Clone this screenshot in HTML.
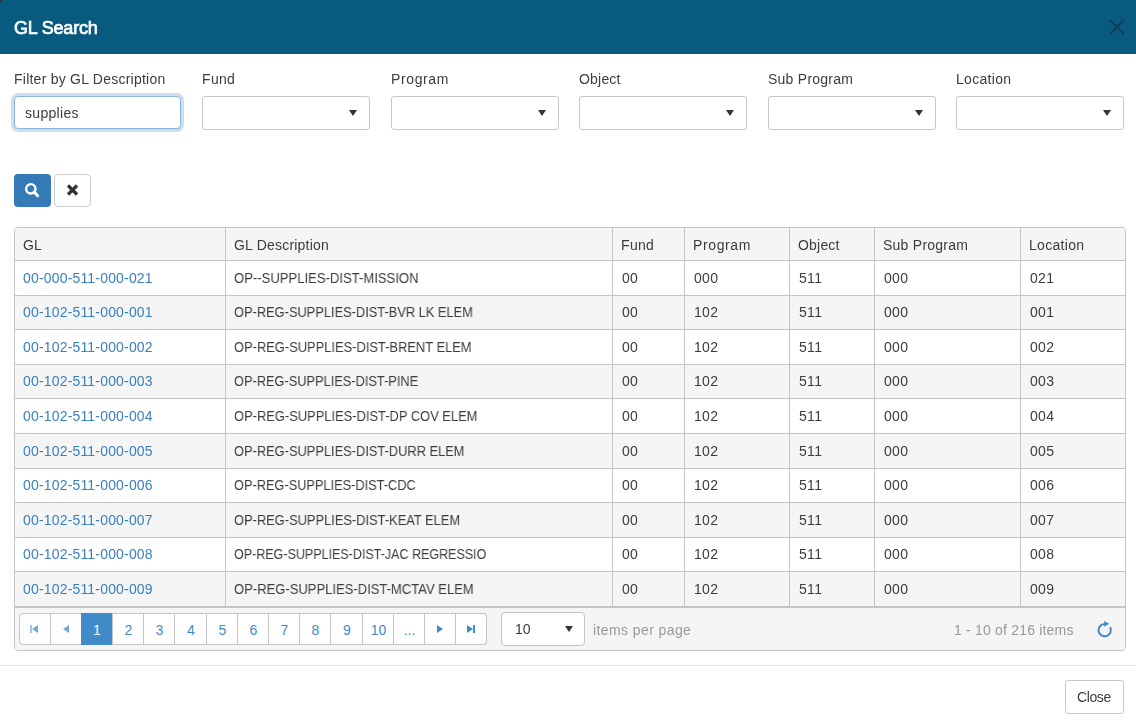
<!DOCTYPE html>
<html><head><meta charset="utf-8"><title>GL Search</title>
<style>
*{box-sizing:border-box}
html,body{margin:0;padding:0}
body{width:1136px;height:726px;overflow:hidden;background:#fff;position:relative;font-family:"Liberation Sans",sans-serif;font-size:14px;color:#3c3c3c}
.abs{position:absolute}
.tx{white-space:nowrap;display:inline-block;will-change:transform}
.hdr{left:0;top:0;width:1136px;height:54px;background:#085a7e}
.title{left:14px;top:17px;font-size:18px;font-weight:normal;-webkit-text-stroke:0.7px #fff;color:#fff;line-height:22px}
.lbl{top:70px;line-height:18px;color:#3c3c3c}
.inp{top:96px;height:34px;width:168px;border:1px solid #c8c8c8;border-radius:3px;background:#fff}
.inp.focus{border-color:#8ab4d9;box-shadow:0 0 0 3px #cddfee}
.caret{position:absolute;width:0;height:0;border-left:4px solid transparent;border-right:4px solid transparent;border-top:6px solid #333}
.btn{top:174px;height:33px;width:37px;border-radius:4px}
.grid{left:14px;top:227px;width:1112px;height:424px;border:1px solid #c5c5c5;border-radius:4px;background:#fff;overflow:hidden}
.cell{position:absolute;line-height:20px}
.vl{position:absolute;width:1px;background:#c5c5c5}
.hl{position:absolute;height:1px;background:#c5c5c5;left:0;width:1110px}
.lnk{color:#3a80c0}
.pbtn{position:absolute;top:613px;height:32px;border:1px solid #c5c5c5;border-left:none;background:#fff;text-align:center;line-height:30px;color:#337ab7}
</style></head><body>

<div class="abs hdr"></div><div class="abs" style="left:0;top:0;width:1px;height:1px;background:#3a0a0a"></div>
<div class="abs title"><span class="tx " style="letter-spacing:-0.2px">GL Search</span></div>
<svg class="abs" style="left:1109px;top:19px" width="16" height="16" viewBox="0 0 16 16"><path d="M1.5 1.5L14.5 14.5M14.5 1.5L1.5 14.5" stroke="#14384a" stroke-width="1.6" stroke-linecap="round"/></svg>
<div class="abs lbl" style="left:14px"><span class="tx " style="letter-spacing:0.239px">Filter by GL Description</span></div>
<div class="abs lbl" style="left:202px"><span class="tx " style="letter-spacing:0.333px">Fund</span></div>
<div class="abs lbl" style="left:391px"><span class="tx " style="letter-spacing:0.617px">Program</span></div>
<div class="abs lbl" style="left:579px"><span class="tx " style="letter-spacing:0.2px">Object</span></div>
<div class="abs lbl" style="left:768px"><span class="tx " style="letter-spacing:0.25px">Sub Program</span></div>
<div class="abs lbl" style="left:956px"><span class="tx " style="letter-spacing:0.314px">Location</span></div>
<div class="abs inp focus" style="left:14px;width:167px;height:33px;border-radius:4px"></div>
<div class="abs" style="left:25px;top:103px;line-height:20px"><span class="tx " style="letter-spacing:0.314px">supplies</span></div>
<div class="abs inp" style="left:202px"></div>
<div class="caret" style="left:349px;top:110px"></div>
<div class="abs inp" style="left:391px"></div>
<div class="caret" style="left:538px;top:110px"></div>
<div class="abs inp" style="left:579px"></div>
<div class="caret" style="left:726px;top:110px"></div>
<div class="abs inp" style="left:768px"></div>
<div class="caret" style="left:915px;top:110px"></div>
<div class="abs inp" style="left:956px"></div>
<div class="caret" style="left:1103px;top:110px"></div>
<div class="abs btn" style="left:14px;background:#337ab7"></div>
<svg class="abs" style="left:23px;top:182px" width="18" height="18" viewBox="0 0 18 18"><circle cx="7.8" cy="6.8" r="4.7" fill="none" stroke="#fff" stroke-width="2.4"/><path d="M11 10L14.6 13.6" stroke="#fff" stroke-width="3" stroke-linecap="round"/></svg>
<div class="abs btn" style="left:54px;border:1px solid #ccc;background:#fff"></div>
<svg class="abs" style="left:64px;top:182px" width="16" height="16" viewBox="0 0 16 16"><path d="M4 3.5L13 12.5M13 3.5L4 12.5" stroke="#333" stroke-width="3.2"/></svg>
<div class="abs grid">
<div class="abs" style="left:0;top:0;width:1110px;height:33px;background:#f5f5f5"></div>
<div class="abs" style="left:0;top:67.6px;width:1110px;height:34.6px;background:#f5f5f5"></div>
<div class="abs" style="left:0;top:136.8px;width:1110px;height:34.6px;background:#f5f5f5"></div>
<div class="abs" style="left:0;top:206.0px;width:1110px;height:34.6px;background:#f5f5f5"></div>
<div class="abs" style="left:0;top:275.20000000000005px;width:1110px;height:34.6px;background:#f5f5f5"></div>
<div class="abs" style="left:0;top:344.40000000000003px;width:1110px;height:34.6px;background:#f5f5f5"></div>
<div class="abs" style="left:0;top:379px;width:1110px;height:44px;background:#f5f5f5"></div>
<div class="hl" style="top:32px"></div>
<div class="hl" style="top:66.6px"></div>
<div class="hl" style="top:101.2px"></div>
<div class="hl" style="top:135.8px"></div>
<div class="hl" style="top:170.4px"></div>
<div class="hl" style="top:205.0px"></div>
<div class="hl" style="top:239.60000000000002px"></div>
<div class="hl" style="top:274.20000000000005px"></div>
<div class="hl" style="top:308.8px"></div>
<div class="hl" style="top:343.40000000000003px"></div>
<div class="hl" style="top:378px;height:2px"></div>
<div class="vl" style="left:210px;top:0;height:379px"></div>
<div class="vl" style="left:597px;top:0;height:379px"></div>
<div class="vl" style="left:669px;top:0;height:379px"></div>
<div class="vl" style="left:774px;top:0;height:379px"></div>
<div class="vl" style="left:859px;top:0;height:379px"></div>
<div class="vl" style="left:1005px;top:0;height:379px"></div>
<div class="cell" style="left:8px;top:7px"><span class="tx ">GL</span></div>
<div class="cell" style="left:219px;top:7px"><span class="tx " style="letter-spacing:0.208px">GL Description</span></div>
<div class="cell" style="left:606px;top:7px"><span class="tx " style="letter-spacing:0.333px">Fund</span></div>
<div class="cell" style="left:678px;top:7px"><span class="tx " style="letter-spacing:0.617px">Program</span></div>
<div class="cell" style="left:783px;top:7px"><span class="tx " style="letter-spacing:0.2px">Object</span></div>
<div class="cell" style="left:868px;top:7px"><span class="tx " style="letter-spacing:0.25px">Sub Program</span></div>
<div class="cell" style="left:1014px;top:7px"><span class="tx " style="letter-spacing:0.314px">Location</span></div>
<div class="cell lnk" style="left:8px;top:39.6px"><span class="tx " style="letter-spacing:0.176px">00-000-511-000-021</span></div>
<div class="cell " style="left:219px;top:39.6px"><span class="tx " style="transform:scaleX(0.934);transform-origin:0 0">OP--SUPPLIES-DIST-MISSION</span></div>
<div class="cell " style="left:606.6px;top:39.6px"><span class="tx" style="letter-spacing:0.3px">00</span></div>
<div class="cell " style="left:678.6px;top:39.6px"><span class="tx" style="letter-spacing:0.3px">000</span></div>
<div class="cell " style="left:783.6px;top:39.6px"><span class="tx" style="letter-spacing:0.3px">511</span></div>
<div class="cell " style="left:868.6px;top:39.6px"><span class="tx" style="letter-spacing:0.3px">000</span></div>
<div class="cell " style="left:1014.6px;top:39.6px"><span class="tx" style="letter-spacing:0.3px">021</span></div>
<div class="cell lnk" style="left:8px;top:74.19999999999999px"><span class="tx " style="letter-spacing:0.176px">00-102-511-000-001</span></div>
<div class="cell " style="left:219px;top:74.19999999999999px"><span class="tx " style="transform:scaleX(0.9165);transform-origin:0 0">OP-REG-SUPPLIES-DIST-BVR LK ELEM</span></div>
<div class="cell " style="left:606.6px;top:74.19999999999999px"><span class="tx" style="letter-spacing:0.3px">00</span></div>
<div class="cell " style="left:678.6px;top:74.19999999999999px"><span class="tx" style="letter-spacing:0.3px">102</span></div>
<div class="cell " style="left:783.6px;top:74.19999999999999px"><span class="tx" style="letter-spacing:0.3px">511</span></div>
<div class="cell " style="left:868.6px;top:74.19999999999999px"><span class="tx" style="letter-spacing:0.3px">000</span></div>
<div class="cell " style="left:1014.6px;top:74.19999999999999px"><span class="tx" style="letter-spacing:0.3px">001</span></div>
<div class="cell lnk" style="left:8px;top:108.8px"><span class="tx " style="letter-spacing:0.176px">00-102-511-000-002</span></div>
<div class="cell " style="left:219px;top:108.8px"><span class="tx " style="transform:scaleX(0.9206);transform-origin:0 0">OP-REG-SUPPLIES-DIST-BRENT ELEM</span></div>
<div class="cell " style="left:606.6px;top:108.8px"><span class="tx" style="letter-spacing:0.3px">00</span></div>
<div class="cell " style="left:678.6px;top:108.8px"><span class="tx" style="letter-spacing:0.3px">102</span></div>
<div class="cell " style="left:783.6px;top:108.8px"><span class="tx" style="letter-spacing:0.3px">511</span></div>
<div class="cell " style="left:868.6px;top:108.8px"><span class="tx" style="letter-spacing:0.3px">000</span></div>
<div class="cell " style="left:1014.6px;top:108.8px"><span class="tx" style="letter-spacing:0.3px">002</span></div>
<div class="cell lnk" style="left:8px;top:143.4px"><span class="tx " style="letter-spacing:0.176px">00-102-511-000-003</span></div>
<div class="cell " style="left:219px;top:143.4px"><span class="tx " style="transform:scaleX(0.9139);transform-origin:0 0">OP-REG-SUPPLIES-DIST-PINE</span></div>
<div class="cell " style="left:606.6px;top:143.4px"><span class="tx" style="letter-spacing:0.3px">00</span></div>
<div class="cell " style="left:678.6px;top:143.4px"><span class="tx" style="letter-spacing:0.3px">102</span></div>
<div class="cell " style="left:783.6px;top:143.4px"><span class="tx" style="letter-spacing:0.3px">511</span></div>
<div class="cell " style="left:868.6px;top:143.4px"><span class="tx" style="letter-spacing:0.3px">000</span></div>
<div class="cell " style="left:1014.6px;top:143.4px"><span class="tx" style="letter-spacing:0.3px">003</span></div>
<div class="cell lnk" style="left:8px;top:178.0px"><span class="tx " style="letter-spacing:0.176px">00-102-511-000-004</span></div>
<div class="cell " style="left:219px;top:178.0px"><span class="tx " style="transform:scaleX(0.9212);transform-origin:0 0">OP-REG-SUPPLIES-DIST-DP COV ELEM</span></div>
<div class="cell " style="left:606.6px;top:178.0px"><span class="tx" style="letter-spacing:0.3px">00</span></div>
<div class="cell " style="left:678.6px;top:178.0px"><span class="tx" style="letter-spacing:0.3px">102</span></div>
<div class="cell " style="left:783.6px;top:178.0px"><span class="tx" style="letter-spacing:0.3px">511</span></div>
<div class="cell " style="left:868.6px;top:178.0px"><span class="tx" style="letter-spacing:0.3px">000</span></div>
<div class="cell " style="left:1014.6px;top:178.0px"><span class="tx" style="letter-spacing:0.3px">004</span></div>
<div class="cell lnk" style="left:8px;top:212.6px"><span class="tx " style="letter-spacing:0.176px">00-102-511-000-005</span></div>
<div class="cell " style="left:219px;top:212.6px"><span class="tx " style="transform:scaleX(0.9171);transform-origin:0 0">OP-REG-SUPPLIES-DIST-DURR ELEM</span></div>
<div class="cell " style="left:606.6px;top:212.6px"><span class="tx" style="letter-spacing:0.3px">00</span></div>
<div class="cell " style="left:678.6px;top:212.6px"><span class="tx" style="letter-spacing:0.3px">102</span></div>
<div class="cell " style="left:783.6px;top:212.6px"><span class="tx" style="letter-spacing:0.3px">511</span></div>
<div class="cell " style="left:868.6px;top:212.6px"><span class="tx" style="letter-spacing:0.3px">000</span></div>
<div class="cell " style="left:1014.6px;top:212.6px"><span class="tx" style="letter-spacing:0.3px">005</span></div>
<div class="cell lnk" style="left:8px;top:247.20000000000002px"><span class="tx " style="letter-spacing:0.176px">00-102-511-000-006</span></div>
<div class="cell " style="left:219px;top:247.20000000000002px"><span class="tx " style="transform:scaleX(0.9126);transform-origin:0 0">OP-REG-SUPPLIES-DIST-CDC</span></div>
<div class="cell " style="left:606.6px;top:247.20000000000002px"><span class="tx" style="letter-spacing:0.3px">00</span></div>
<div class="cell " style="left:678.6px;top:247.20000000000002px"><span class="tx" style="letter-spacing:0.3px">102</span></div>
<div class="cell " style="left:783.6px;top:247.20000000000002px"><span class="tx" style="letter-spacing:0.3px">511</span></div>
<div class="cell " style="left:868.6px;top:247.20000000000002px"><span class="tx" style="letter-spacing:0.3px">000</span></div>
<div class="cell " style="left:1014.6px;top:247.20000000000002px"><span class="tx" style="letter-spacing:0.3px">006</span></div>
<div class="cell lnk" style="left:8px;top:281.80000000000007px"><span class="tx " style="letter-spacing:0.176px">00-102-511-000-007</span></div>
<div class="cell " style="left:219px;top:281.80000000000007px"><span class="tx " style="transform:scaleX(0.9187);transform-origin:0 0">OP-REG-SUPPLIES-DIST-KEAT ELEM</span></div>
<div class="cell " style="left:606.6px;top:281.80000000000007px"><span class="tx" style="letter-spacing:0.3px">00</span></div>
<div class="cell " style="left:678.6px;top:281.80000000000007px"><span class="tx" style="letter-spacing:0.3px">102</span></div>
<div class="cell " style="left:783.6px;top:281.80000000000007px"><span class="tx" style="letter-spacing:0.3px">511</span></div>
<div class="cell " style="left:868.6px;top:281.80000000000007px"><span class="tx" style="letter-spacing:0.3px">000</span></div>
<div class="cell " style="left:1014.6px;top:281.80000000000007px"><span class="tx" style="letter-spacing:0.3px">007</span></div>
<div class="cell lnk" style="left:8px;top:316.40000000000003px"><span class="tx " style="letter-spacing:0.176px">00-102-511-000-008</span></div>
<div class="cell " style="left:219px;top:316.40000000000003px"><span class="tx " style="transform:scaleX(0.8936);transform-origin:0 0">OP-REG-SUPPLIES-DIST-JAC REGRESSIO</span></div>
<div class="cell " style="left:606.6px;top:316.40000000000003px"><span class="tx" style="letter-spacing:0.3px">00</span></div>
<div class="cell " style="left:678.6px;top:316.40000000000003px"><span class="tx" style="letter-spacing:0.3px">102</span></div>
<div class="cell " style="left:783.6px;top:316.40000000000003px"><span class="tx" style="letter-spacing:0.3px">511</span></div>
<div class="cell " style="left:868.6px;top:316.40000000000003px"><span class="tx" style="letter-spacing:0.3px">000</span></div>
<div class="cell " style="left:1014.6px;top:316.40000000000003px"><span class="tx" style="letter-spacing:0.3px">008</span></div>
<div class="cell lnk" style="left:8px;top:351.00000000000006px"><span class="tx " style="letter-spacing:0.176px">00-102-511-000-009</span></div>
<div class="cell " style="left:219px;top:351.00000000000006px"><span class="tx " style="transform:scaleX(0.93);transform-origin:0 0">OP-REG-SUPPLIES-DIST-MCTAV ELEM</span></div>
<div class="cell " style="left:606.6px;top:351.00000000000006px"><span class="tx" style="letter-spacing:0.3px">00</span></div>
<div class="cell " style="left:678.6px;top:351.00000000000006px"><span class="tx" style="letter-spacing:0.3px">102</span></div>
<div class="cell " style="left:783.6px;top:351.00000000000006px"><span class="tx" style="letter-spacing:0.3px">511</span></div>
<div class="cell " style="left:868.6px;top:351.00000000000006px"><span class="tx" style="letter-spacing:0.3px">000</span></div>
<div class="cell " style="left:1014.6px;top:351.00000000000006px"><span class="tx" style="letter-spacing:0.3px">009</span></div>
</div>
<div class="abs" style="left:19px;top:613px;width:468px;height:32px;border:1px solid #c5c5c5;border-radius:4px;background:#fdfdfd"></div>
<div class="abs" style="left:81px;top:613px;width:406px;height:32px;border:1px solid #c5c5c5;border-left:none;border-radius:0 4px 4px 0;background:#fff"></div>
<div class="vl" style="left:50px;top:613px;height:32px"></div>
<div class="vl" style="left:81px;top:613px;height:32px"></div>
<div class="abs" style="left:81px;top:613px;width:32px;height:32px;background:#428bca"></div>
<div class="abs" style="left:81px;top:620px;width:32px;text-align:center;line-height:20px;color:#fff">1</div>
<div class="vl" style="left:112px;top:613px;height:32px"></div>
<div class="abs" style="left:113px;top:620px;width:31px;text-align:center;line-height:20px;color:#428bca">2</div>
<div class="vl" style="left:143px;top:613px;height:32px"></div>
<div class="abs" style="left:144px;top:620px;width:31px;text-align:center;line-height:20px;color:#428bca">3</div>
<div class="vl" style="left:174px;top:613px;height:32px"></div>
<div class="abs" style="left:175px;top:620px;width:32px;text-align:center;line-height:20px;color:#428bca">4</div>
<div class="vl" style="left:206px;top:613px;height:32px"></div>
<div class="abs" style="left:207px;top:620px;width:31px;text-align:center;line-height:20px;color:#428bca">5</div>
<div class="vl" style="left:237px;top:613px;height:32px"></div>
<div class="abs" style="left:238px;top:620px;width:31px;text-align:center;line-height:20px;color:#428bca">6</div>
<div class="vl" style="left:268px;top:613px;height:32px"></div>
<div class="abs" style="left:269px;top:620px;width:31px;text-align:center;line-height:20px;color:#428bca">7</div>
<div class="vl" style="left:299px;top:613px;height:32px"></div>
<div class="abs" style="left:300px;top:620px;width:31px;text-align:center;line-height:20px;color:#428bca">8</div>
<div class="vl" style="left:330px;top:613px;height:32px"></div>
<div class="abs" style="left:331px;top:620px;width:32px;text-align:center;line-height:20px;color:#428bca">9</div>
<div class="vl" style="left:362px;top:613px;height:32px"></div>
<div class="abs" style="left:363px;top:620px;width:31px;text-align:center;line-height:20px;color:#428bca">10</div>
<div class="vl" style="left:393px;top:613px;height:32px"></div>
<div class="abs" style="left:394px;top:620px;width:31px;text-align:center;line-height:20px;color:#428bca">...</div>
<div class="vl" style="left:424px;top:613px;height:32px"></div>
<div class="vl" style="left:455px;top:613px;height:32px"></div>
<svg class="abs" style="left:28px;top:624px" width="14" height="10" viewBox="0 0 14 10"><rect x="2" y="1" width="2" height="8" fill="#a3c5e5"/><path d="M4 5L10 1V9Z" fill="#74a6d4"/></svg>
<svg class="abs" style="left:59px;top:624px" width="14" height="10" viewBox="0 0 14 10"><path d="M4 5L10 1V9Z" fill="#74a6d4"/></svg>
<svg class="abs" style="left:434px;top:624px" width="14" height="10" viewBox="0 0 14 10"><path d="M9 5L3 1V9Z" fill="#428bca"/></svg>
<svg class="abs" style="left:464px;top:624px" width="14" height="10" viewBox="0 0 14 10"><path d="M9 5L3 1V9Z" fill="#428bca"/><rect x="9" y="1" width="2" height="8" fill="#428bca"/></svg>
<div class="abs" style="left:501px;top:612px;width:84px;height:34px;border:1px solid #c5c5c5;border-radius:4px;background:#fff"></div>
<div class="abs" style="left:515px;top:619px;line-height:20px"><span class="tx ">10</span></div>
<div class="caret" style="left:565px;top:626px"></div>
<div class="abs" style="left:593px;top:620px;line-height:20px;color:#999"><span class="tx " style="letter-spacing:0.408px">items per page</span></div>
<div class="abs" style="left:954px;top:620px;line-height:20px;color:#999"><span class="tx " style="letter-spacing:0.194px">1 - 10 of 216 items</span></div>
<svg class="abs" style="left:1095px;top:620px" width="20" height="20" viewBox="0 0 20 20"><path d="M15.1 7.1A6.2 6.2 0 1 1 9.7 3.9" fill="none" stroke="#3d87c7" stroke-width="2"/><path d="M9.2 1L14.2 3.8L9.2 6.8Z" fill="#3d87c7"/></svg>
<div class="abs" style="left:0;top:665px;width:1136px;height:1px;background:#dfe3e7"></div>
<div class="abs" style="left:1065px;top:680px;width:59px;height:34px;border:1px solid #c8c8c8;border-radius:3px;background:#fff"></div>
<div class="abs" style="left:1077px;top:687px;line-height:20px"><span class="tx " style="letter-spacing:-0.4px">Close</span></div>
</body></html>
